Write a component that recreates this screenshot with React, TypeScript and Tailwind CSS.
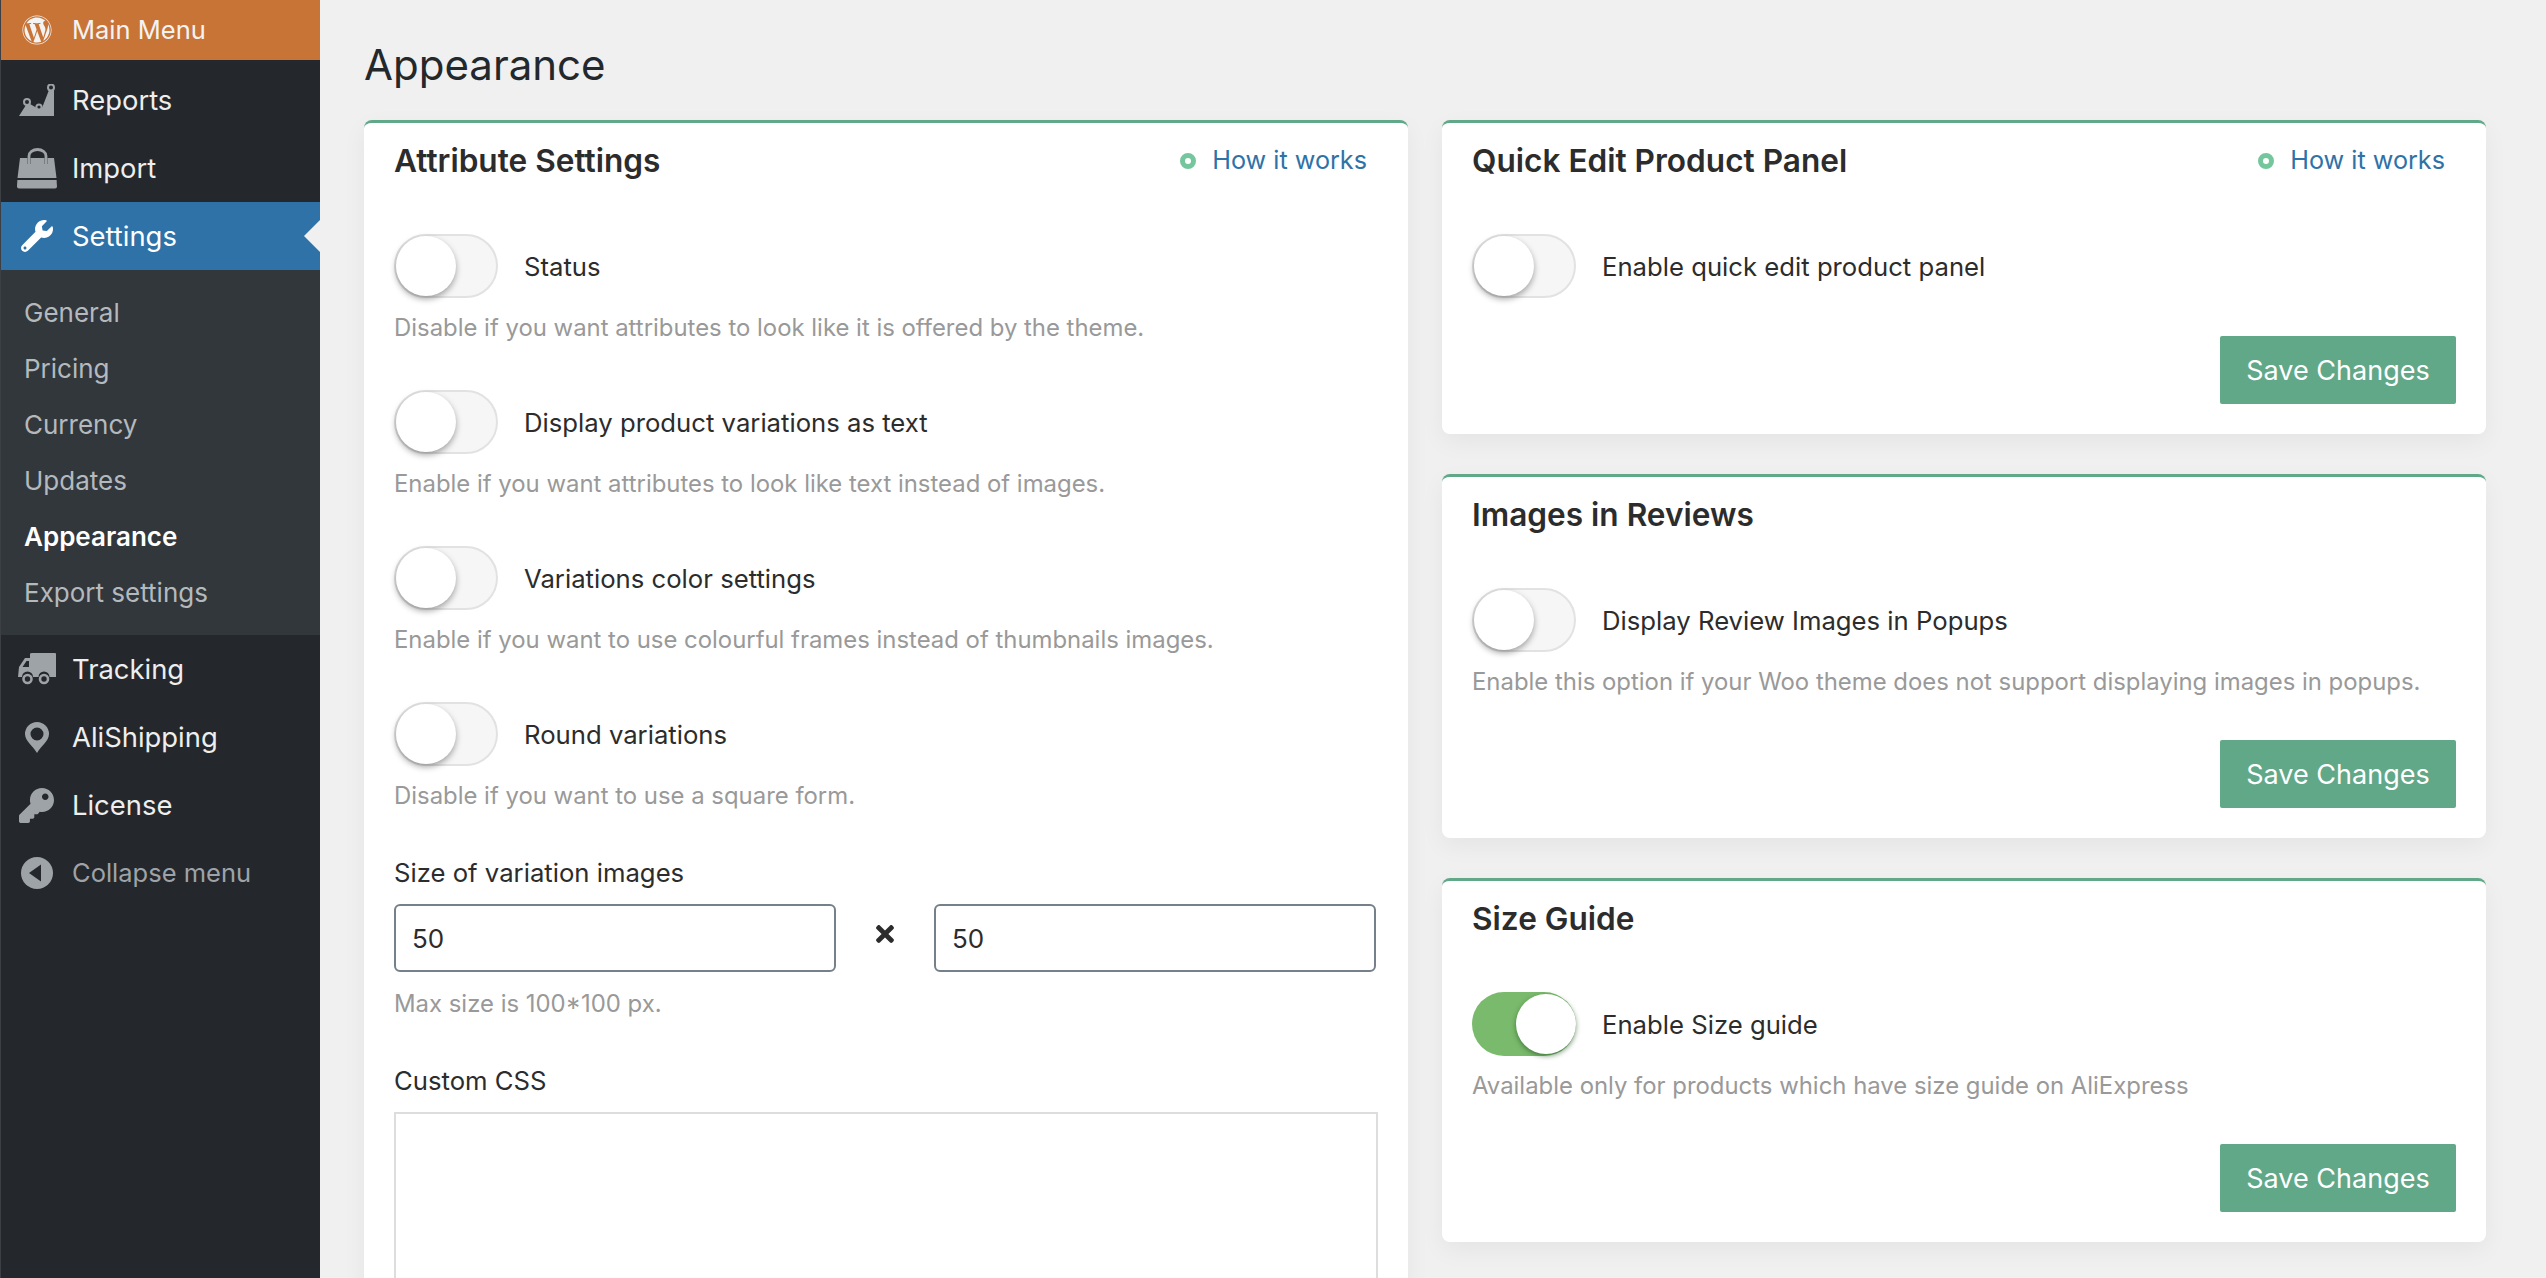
import { FaWordpress, FaWrench, FaKey, FaTimes } from 'react-icons/fa'

function ReportsIcon() {
  return (
    <svg viewBox="0 0 36 33" className="w-[36px] h-[33px]">
      <path d="M0 32 L7 21 L11 20 L18 24 L23 24 L30 6 L35 5 V32 Z" fill="#9ea3a8" />
      <circle cx="8" cy="18" r="3" fill="#24272c" stroke="#9ea3a8" strokeWidth="2" />
      <circle cx="20" cy="23" r="2.6" fill="#24272c" stroke="#9ea3a8" strokeWidth="2" />
      <circle cx="32" cy="3.5" r="3" fill="#24272c" stroke="#9ea3a8" strokeWidth="2" />
    </svg>
  )
}

function BagIcon() {
  return (
    <svg viewBox="0 0 40 41" className="w-[40px] h-[41px]">
      <path d="M12 16 V8 a8.5 6.5 0 0 1 17 0 V16" fill="none" stroke="#9ea3a8" strokeWidth="2.8" />
      <path d="M3 10 H10.5 V16 H13.5 V10 H27.5 V16 H30.5 V10 H37 L39.5 30 H.5 Z" fill="#9ea3a8" />
      <path d="M.4 32 H39.6 L40 38.5 Q40 40.5 38 40.5 H2 Q0 40.5 0 38.5 Z" fill="#9ea3a8" />
    </svg>
  )
}

function TruckIcon() {
  return (
    <svg viewBox="0 0 38 32" className="w-[38px] h-[32px]">
      <path d="M12 1 Q12 0 14 0 H37 Q38 0 38 1 V24 H31.5 A5.5 5.5 0 0 0 20.5 24 H15 A5.5 5.5 0 0 0 4 24 H0 L1 14 L7 5 H12 Z" fill="#9ea3a8" />
      <path d="M4.5 14 L8.5 8 H11 V14 Z" fill="#24272c" />
      <circle cx="9.5" cy="26" r="4" fill="#24272c" stroke="#9ea3a8" strokeWidth="2.6" />
      <circle cx="26" cy="26" r="4" fill="#24272c" stroke="#9ea3a8" strokeWidth="2.6" />
    </svg>
  )
}

function PinIcon() {
  return (
    <svg viewBox="0 0 24 31" className="w-[24px] h-[31px]">
      <path fillRule="evenodd" d="M12 0 A12 12 0 0 1 24 12 C24 19 16 24 12 31 C8 24 0 19 0 12 A12 12 0 0 1 12 0 Z M12 5.5 A6.5 6.5 0 1 0 12 18.5 A6.5 6.5 0 1 0 12 5.5 Z" fill="#9ea3a8" />
    </svg>
  )
}

function CollapseIcon() {
  return (
    <svg viewBox="0 0 32 32" className="w-[32px] h-[32px]">
      <circle cx="16" cy="16" r="16" fill="#9ea3a8" />
      <path d="M8 16 L20 7.5 V24.5 Z" fill="#24272c" />
    </svg>
  )
}

function MenuItem({ icon, label, active }: { icon: React.ReactNode; label: string; active?: boolean }) {
  return (
    <div className={`relative flex items-center h-[68px] ${active ? 'bg-[#2e72a7] text-white' : 'text-[#eeeeee]'}`}>
      <div className="w-[71px] flex justify-center shrink-0">{icon}</div>
      <span className="pt-[1px] text-[27.4px] leading-none">{label}</span>
      {active && (
        <div className="absolute right-0 top-[18px] w-0 h-0 border-y-[16px] border-y-transparent border-r-[16px] border-r-[#f0f0f1]" />
      )}
    </div>
  )
}

function Toggle({ on }: { on?: boolean }) {
  return (
    <div
      className={`relative w-[104px] h-[64px] rounded-full shrink-0 ${
        on ? 'bg-[#7aba6c]' : 'bg-[#f6f6f6] border-2 border-[#e2e2e2]'
      }`}
    >
      <div
        className={`absolute w-[60px] h-[60px] rounded-full bg-white ${
          on
            ? 'right-0 top-[2px] shadow-[0_2px_5px_rgba(20,70,20,0.55)]'
            : 'left-0 top-0 shadow-[0_3px_6px_rgba(0,0,0,0.35)]'
        }`}
      />
    </div>
  )
}

function ToggleRow({ label, on }: { label: string; on?: boolean }) {
  return (
    <div className="flex items-center gap-[26px] h-[64px]">
      <Toggle on={on} />
      <span className="pt-[2px] text-[25.7px] leading-none text-[#2c2c2c]">{label}</span>
    </div>
  )
}

function Hint({ children, className = '' }: { children: React.ReactNode; className?: string }) {
  return <p className={`text-[23.9px] leading-[34px] text-[#999999] ${className}`}>{children}</p>
}

function CardHead({ title, link }: { title: string; link?: boolean }) {
  return (
    <div className="flex items-center justify-between h-[40px] pt-[2px] pr-[11px]">
      <h2 className="text-[31.6px] leading-none font-semibold text-[#2c2c2c]">{title}</h2>
      {link && (
        <div className="flex items-center gap-[16px]">
          <span className="w-[16px] h-[16px] rounded-full border-[5px] border-[#74c69d]" />
          <a className="text-[25.2px] leading-none text-[#2e72a7]">How it works</a>
        </div>
      )}
    </div>
  )
}

function Card({ children }: { children: React.ReactNode }) {
  return (
    <section className="bg-white rounded-lg border-t-[3px] border-[#61a889] px-[30px] pt-[17px] pb-[30px] shadow-[0_8px_24px_rgba(0,0,0,0.05)]">
      {children}
    </section>
  )
}

function SaveButton({ className = '' }: { className?: string }) {
  return (
    <div className={`flex justify-end ${className}`}>
      <button className="w-[236px] h-[68px] pt-[2px] bg-[#61a889] text-white text-[27px] rounded-[2px]">Save Changes</button>
    </div>
  )
}

const subItems = ['General', 'Pricing', 'Currency', 'Updates', 'Appearance', 'Export settings']

const attributes = [
  { label: 'Status', hint: 'Disable if you want attributes to look like it is offered by the theme.' },
  { label: 'Display product variations as text', hint: 'Enable if you want attributes to look like text instead of images.' },
  { label: 'Variations color settings', hint: 'Enable if you want to use colourful frames instead of thumbnails images.' },
  { label: 'Round variations', hint: 'Disable if you want to use a square form.' },
]

export default function App() {
  return (
    <div className="flex h-screen overflow-hidden bg-[#f0f0f1] font-[Inter,sans-serif]">
      {/* Sidebar */}
      <aside className="w-[320px] shrink-0 bg-[#24272c] border-l border-[#3c4045]">
        <div className="flex items-center h-[60px] bg-[#c97437] text-[#f3f3f3]">
          <div className="w-[71px] flex justify-center shrink-0">
            <FaWordpress size={30} color="#f3f3f3" />
          </div>
          <span className="text-[25.5px] leading-none">Main Menu</span>
        </div>
        <div className="mt-[6px]">
          <MenuItem icon={<ReportsIcon />} label="Reports" />
          <MenuItem icon={<BagIcon />} label="Import" />
          <MenuItem icon={<FaWrench size={32} color="#ffffff" />} label="Settings" active />
        </div>
        <div className="bg-[#32373c] pt-[15px] pb-[14px]">
          {subItems.map((item) => (
            <div
              key={item}
              className={`flex items-center h-[56px] pl-[23px] text-[26px] leading-none ${
                item === 'Appearance' ? 'text-white font-semibold' : 'text-[#b4b9be]'
              }`}
            >
              {item}
            </div>
          ))}
        </div>
        <MenuItem icon={<TruckIcon />} label="Tracking" />
        <MenuItem icon={<PinIcon />} label="AliShipping" />
        <MenuItem icon={<FaKey size={35} color="#9ea3a8" />} label="License" />
        <div className="flex items-center h-[68px] text-[#9ea3a8]">
          <div className="w-[71px] flex justify-center shrink-0">
            <CollapseIcon />
          </div>
          <span className="text-[25.5px] leading-none">Collapse menu</span>
        </div>
      </aside>

      {/* Content */}
      <main className="flex-1 pl-[44px] pr-[60px]">
        <h1 className="h-[120px] flex items-center pt-[10px] text-[42px] leading-none text-[#23282d]">Appearance</h1>
        <div className="grid grid-cols-2 gap-[34px] items-start">
          <Card>
            <CardHead title="Attribute Settings" link />
            <div className="mt-[54px] flex flex-col gap-[45px]">
              {attributes.map((a) => (
                <div key={a.label}>
                  <ToggleRow label={a.label} />
                  <Hint className="mt-[13px]">{a.hint}</Hint>
                </div>
              ))}
            </div>
            <label className="block mt-[43px] text-[25.7px] leading-[34px] text-[#2c2c2c]">Size of variation images</label>
            <div className="mt-[14px] pr-[2px] flex items-center">
              <input
                defaultValue="50"
                className="w-[442px] h-[68px] px-[16px] border-2 border-[#75808a] rounded-[6px] text-[26px] text-[#2c2c2c] outline-none"
              />
              <div className="flex-1 flex justify-center pb-[8px]">
                <FaTimes size={26} color="#2c2c2c" />
              </div>
              <input
                defaultValue="50"
                className="w-[442px] h-[68px] px-[16px] border-2 border-[#75808a] rounded-[6px] text-[26px] text-[#2c2c2c] outline-none"
              />
            </div>
            <Hint className="mt-[15px]">Max size is 100*100 px.</Hint>
            <label className="block mt-[43px] text-[25.7px] leading-[34px] text-[#2c2c2c]">Custom CSS</label>
            <textarea className="block mt-[14px] w-[984px] h-[300px] border-2 border-[#dddddd] outline-none resize-none" />
          </Card>

          <div className="flex flex-col gap-[40px]">
            <Card>
              <CardHead title="Quick Edit Product Panel" link />
              <div className="mt-[54px]">
                <ToggleRow label="Enable quick edit product panel" />
              </div>
              <SaveButton className="mt-[38px]" />
            </Card>
            <Card>
              <CardHead title="Images in Reviews" />
              <div className="mt-[54px]">
                <ToggleRow label="Display Review Images in Popups" />
              </div>
              <Hint className="mt-[13px]">Enable this option if your Woo theme does not support displaying images in popups.</Hint>
              <SaveButton className="mt-[41px]" />
            </Card>
            <Card>
              <CardHead title="Size Guide" />
              <div className="mt-[54px]">
                <ToggleRow label="Enable Size guide" on />
              </div>
              <Hint className="mt-[13px]">Available only for products which have size guide on AliExpress</Hint>
              <SaveButton className="mt-[41px]" />
            </Card>
          </div>
        </div>
      </main>
    </div>
  )
}
